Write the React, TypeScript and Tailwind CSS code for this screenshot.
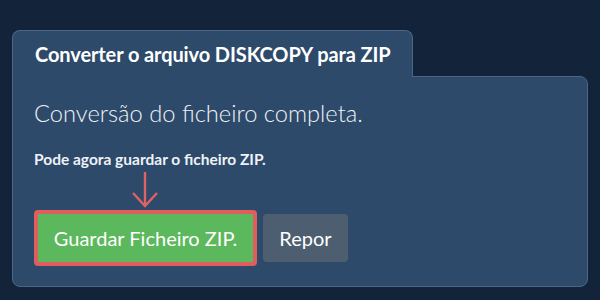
import React from 'react';

export default function App() {
  return (
    <div
      className="w-[600px] h-[300px] bg-[#12233a] px-3 pt-[30px] overflow-hidden"
      style={{ fontFamily: 'Lato, "Open Sans", sans-serif' }}
    >
      {/* Onglet */}
      <div className="relative z-10 -mb-px w-[401px] h-[47px] bg-[#2d4a6b] border border-b-0 border-[#4b6787] rounded-t-lg flex items-center pl-[22px]">
        <h1 className="text-white font-bold text-[20px] tracking-[-0.1px]">
          Converter o arquivo DISKCOPY para ZIP
        </h1>
      </div>

      {/* Panneau */}
      <div className="w-[576px] h-[211px] bg-[#2d4a6b] border border-[#4b6787] rounded-lg rounded-tl-none pl-[21px] pt-[20px]">
        <p className="text-[#eef2f6] text-[23.7px] font-light leading-8">
          Conversão do ficheiro completa.
        </p>
        <p className="mt-[20px] text-[#eef2f6] text-[15.5px] font-bold leading-5">
          Pode agora guardar o ficheiro ZIP.
        </p>
        <div className="relative mt-[41px] flex items-center gap-[6px]">
          <svg
            className="absolute left-[97px] -top-[39px]"
            width="28"
            height="37"
            viewBox="0 0 28 37"
            fill="none"
            stroke="#e06262"
            strokeWidth="2.4"
          >
            <line x1="14" y1="1" x2="14" y2="35" />
            <polyline points="2,22 14,35 26,22" />
          </svg>
          <button className="h-[56px] w-[223px] bg-[#5cb85c] border-[4px] border-[#e05d5d] rounded-[4px] text-white text-[20px] font-normal">
            Guardar Ficheiro ZIP.
          </button>
          <button className="h-[48px] w-[85px] bg-[#4d5e70] rounded-[4px] text-white text-[20px] font-normal">
            Repor
          </button>
        </div>
      </div>
    </div>
  );
}
